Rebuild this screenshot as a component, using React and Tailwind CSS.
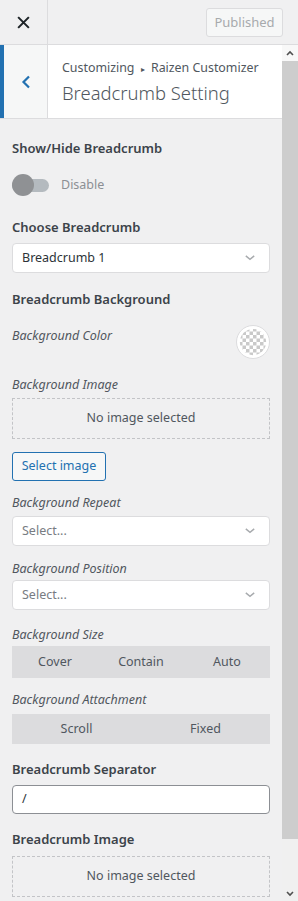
import { useState } from "react";

const font = { fontFamily: '"Noto Sans", "Open Sans", sans-serif' };

function Chevron() {
  return (
    <svg className="w-[14px] h-[14px] text-[#a7aaad]" viewBox="0 0 20 20" fill="none" stroke="currentColor" strokeWidth={2}>
      <path d="M4 7l6 5 6-5" />
    </svg>
  );
}

function SelectBox({ value, placeholder }) {
  return (
    <div className="h-[30px] bg-white border border-[#dcdcde] rounded-[4px] flex items-center justify-between pl-[9px] pr-[12px]">
      <span className={`text-[12.5px] ${value ? "text-[#2c3338]" : "text-[#787c82]"}`}>{value || placeholder}</span>
      <Chevron />
    </div>
  );
}

function NoImage() {
  return (
    <div className="h-[41px] border border-dashed border-[#c3c4c7] flex items-center justify-center text-[12.5px] text-[#50575e]">
      No image selected
    </div>
  );
}

function Segments({ items, h }) {
  return (
    <div className={`${h} bg-[#dcdcde] flex items-center`}>
      {items.map((it) => (
        <div key={it} className="flex-1 text-center text-[12.5px] text-[#50575e]">{it}</div>
      ))}
    </div>
  );
}

function Checker() {
  const cells = [];
  for (let r = 0; r < 8; r++) {
    for (let c = 0; c < 8; c++) {
      if ((r + c) % 2 === 0) cells.push(<rect key={`${r}-${c}`} x={c * 4} y={r * 4} width="4" height="4" fill="#c9c9c9" />);
    }
  }
  return (
    <div className="w-[34px] h-[34px] rounded-full border border-[#dcdcde] bg-white flex items-center justify-center">
      <svg width="28" height="28" viewBox="0 0 32 32">
        <defs>
          <clipPath id="cc"><circle cx="16" cy="16" r="15" /></clipPath>
        </defs>
        <g clipPath="url(#cc)">
          <rect width="32" height="32" fill="#ffffff" />
          {cells}
        </g>
      </svg>
    </div>
  );
}

const label = "text-[13px] font-semibold text-[#3c434a] leading-[20px]";
const sub = "text-[12.5px] italic text-[#50575e] leading-[18px]";

export default function App() {
  const [on, setOn] = useState(false);

  return (
    <div className="w-[298px] h-[901px] bg-[#f0f0f1] flex flex-col overflow-hidden" style={font}>
      {/* Top bar */}
      <div className="h-[45px] flex border-b border-[#dcdcde] shrink-0">
        <button className="w-[48px] border-r border-[#dcdcde] flex items-center justify-center text-[#1d2327]">
          <svg className="w-[13px] h-[13px]" viewBox="0 0 14 14" stroke="currentColor" strokeWidth={2.2} strokeLinecap="square">
            <path d="M2 2l10 10M12 2L2 12" />
          </svg>
        </button>
        <div className="flex-1 flex items-center justify-end pr-[15px]">
          <button className="h-[29px] w-[77px] mt-[1px] border border-[#dcdcde] bg-[#f6f7f7] rounded-[3px] text-[13px] text-[#a7aaad]">
            Published
          </button>
        </div>
      </div>

      <div className="flex flex-1 min-h-0">
        <div className="w-[282px] flex flex-col">
          {/* Section title */}
          <div className="h-[74px] flex border-b border-[#dcdcde] shrink-0">
            <div className="w-[48px] bg-[#f6f7f7] border-l-[4px] border-[#2271b1] border-r border-r-[#dcdcde] flex items-center justify-center text-[#2271b1]">
              <svg className="w-[12px] h-[14px]" viewBox="0 0 12 14" fill="none" stroke="currentColor" strokeWidth={2.2}>
                <path d="M9 1.5L3.5 7 9 12.5" />
              </svg>
            </div>
            <div className="flex-1 bg-white pl-[14px] pt-[14px]">
              <div className="text-[12.4px] text-[#50575e] leading-[18px]">
                Customizing <span className="text-[8px] align-middle px-[3px]">▸</span> Raizen Customizer
              </div>
              <div className="text-[18.4px] font-light text-[#50575e] leading-[28px] mt-[1px]">Breadcrumb Setting</div>
            </div>
          </div>

          {/* Controls */}
          <div className="px-[12px] pt-[19px] flex flex-col">
            <div className={label}>Show/Hide Breadcrumb</div>
            <div className="flex items-center mt-[16px] h-[22px]">
              <button onClick={() => setOn(!on)} className="relative w-[37px] h-[22px] flex items-center">
                <span className="absolute left-0 right-0 h-[13px] rounded-full bg-[#b4babf]" />
                <span className="absolute left-0 w-[22px] h-[22px] rounded-full bg-[#8f9194]" />
              </button>
              <span className="ml-[12px] text-[12.5px] text-[#8c8f94]">Disable</span>
            </div>

            <div className={`${label} mt-[21px]`}>Choose Breadcrumb</div>
            <div className="mt-[6px]"><SelectBox value="Breadcrumb 1" /></div>

            <div className={`${label} mt-[16px]`}>Breadcrumb Background</div>

            <div className="flex items-start justify-between mt-[16px]">
              <div className={`${sub} mt-[2px]`}>Background Color</div>
              <Checker />
            </div>

            <div className={`${sub} mt-[17px]`}>Background Image</div>
            <div className="mt-[4px]"><NoImage /></div>
            <div className="mt-[13px]">
              <button className="h-[29px] w-[94px] border border-[#2271b1] text-[#2271b1] bg-[#f6f7f7] rounded-[3px] text-[12.5px]">
                Select image
              </button>
            </div>

            <div className={`${sub} mt-[13px]`}>Background Repeat</div>
            <div className="mt-[4px]"><SelectBox placeholder="Select..." /></div>

            <div className={`${sub} mt-[14px]`}>Background Position</div>
            <div className="mt-[2px]"><SelectBox placeholder="Select..." /></div>

            <div className={`${sub} mt-[16px]`}>Background Size</div>
            <div className="mt-[2px]"><Segments items={["Cover", "Contain", "Auto"]} h="h-[32px]" /></div>

            <div className={`${sub} mt-[13px]`}>Background Attachment</div>
            <div className="mt-[5px]"><Segments items={["Scroll", "Fixed"]} h="h-[30px]" /></div>

            <div className={`${label} mt-[15px]`}>Breadcrumb Separator</div>
            <div className="mt-[6px] h-[29px] bg-white border border-[#8c8f94] rounded-[4px] flex items-center pl-[9px] text-[12.5px] text-[#2c3338]">/</div>

            <div className={`${label} mt-[15px]`}>Breadcrumb Image</div>
            <div className="mt-[7px]"><NoImage /></div>
          </div>
        </div>

        {/* Scrollbar */}
        <div className="w-[16px] bg-[#f0f0f0] flex flex-col">
          <div className="h-[16px] bg-[#f8f8f8] flex items-center justify-center text-[#505050]">
            <svg width="8" height="6" viewBox="0 0 8 6" fill="none" stroke="currentColor" strokeWidth={1.6}>
              <path d="M1 5l3-3 3 3" />
            </svg>
          </div>
          <div className="h-[778px] bg-[#cdcdcd]" />
          <div className="flex-1" />
          <div className="h-[14px] flex items-center justify-center text-[#505050]">
            <svg width="8" height="6" viewBox="0 0 8 6" fill="none" stroke="currentColor" strokeWidth={1.6}>
              <path d="M1 1l3 3 3-3" />
            </svg>
          </div>
        </div>
      </div>
    </div>
  );
}
